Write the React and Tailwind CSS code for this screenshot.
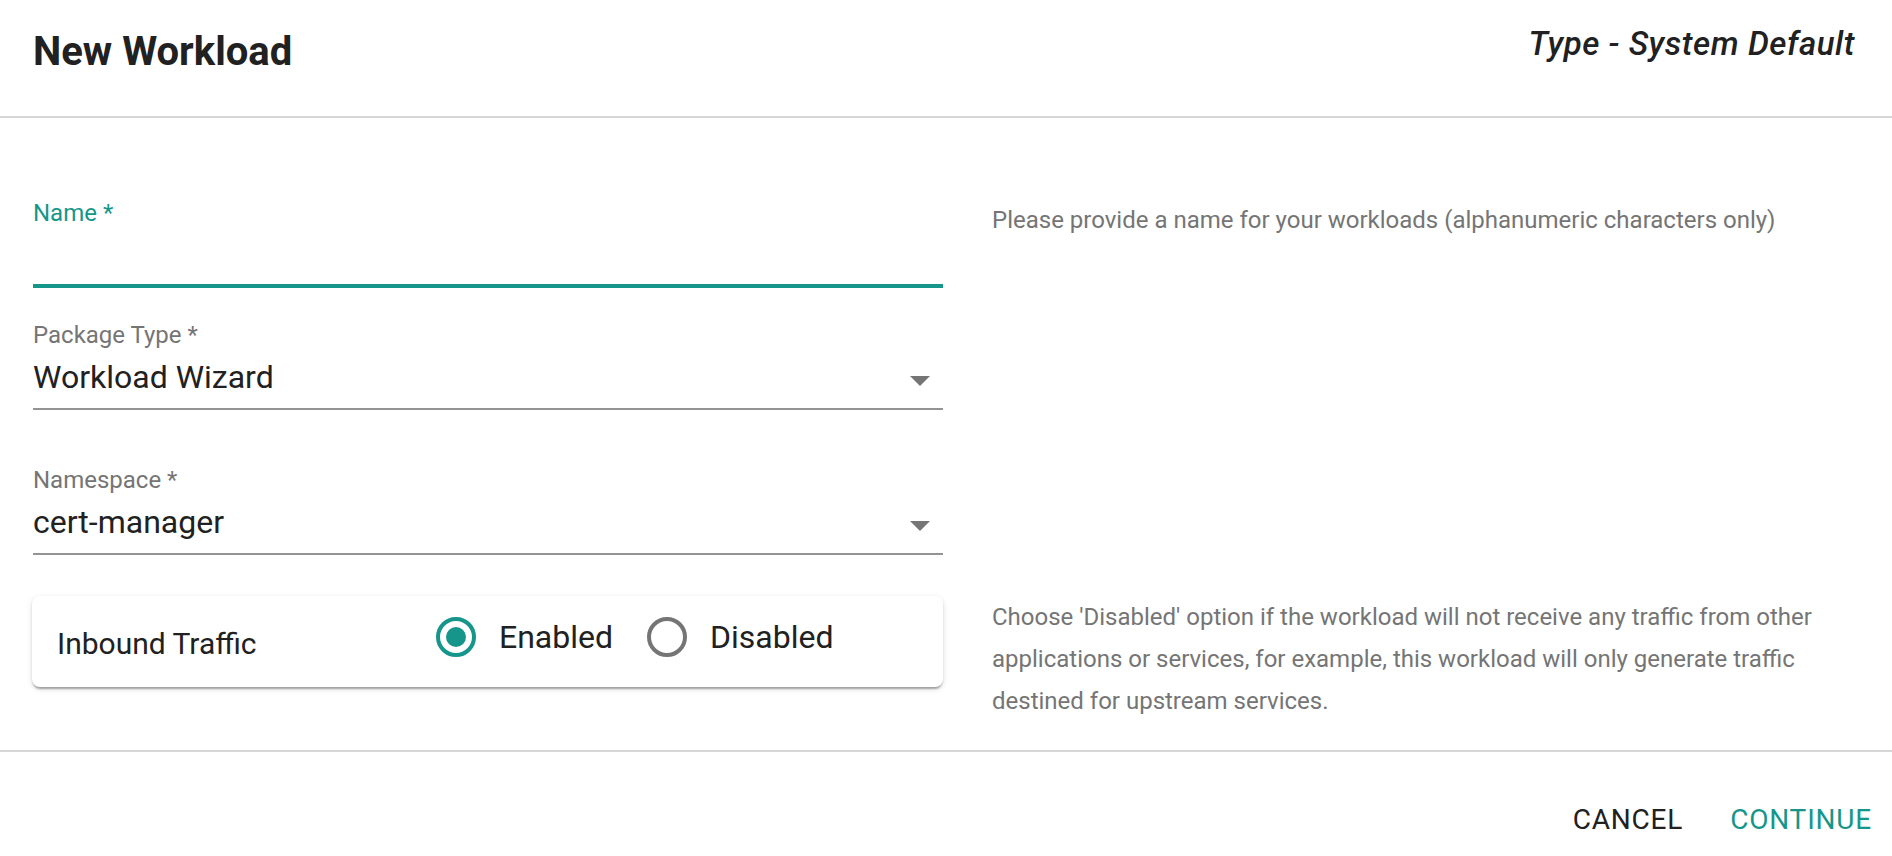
import React from "react";

const TEAL = "#16968a";

function Arrow() {
  return (
    <svg width="20" height="10" viewBox="0 0 20 10" className="mt-[8px] mr-[13px] shrink-0">
      <path d="M0 0 L20 0 L10 10 Z" fill="#757575" />
    </svg>
  );
}

function Radio({ checked, label }) {
  return (
    <div className="flex items-center">
      <svg width="48" height="48" viewBox="0 0 24 24" className="shrink-0">
        <circle cx="12" cy="12" r="9" fill="none" stroke={checked ? TEAL : "#757575"} strokeWidth="2" />
        {checked && <circle cx="12" cy="12" r="5" fill={TEAL} />}
      </svg>
      <span className="ml-[19px] text-[32px] leading-[38px] text-[#212121]">{label}</span>
    </div>
  );
}

function SelectField({ label, value }) {
  return (
    <div className="border-b-2 border-[#949494] pb-[12px]">
      <div className="text-[24px] leading-[24px] text-[#757575]">{label}</div>
      <div className="mt-[11px] flex items-center justify-between">
        <span className="text-[32px] leading-[38px] text-[#212121]">{value}</span>
        <Arrow />
      </div>
    </div>
  );
}

export default function App() {
  return (
    <div className="w-[1892px] h-[856px] overflow-hidden bg-white font-['Roboto',sans-serif]">
      {/* header */}
      <header className="h-[118px] border-b-2 border-[#d6d6d6] flex justify-between items-start pl-[33px] pr-[37px]">
        <h1 className="mt-[28px] text-[40px] leading-[48px] font-bold text-[#212121]">New Workload</h1>
        <div className="mt-[24px] text-[33px] leading-[40px] tracking-[0.55px] font-medium italic text-[#212121]">
          Type - System Default
        </div>
      </header>

      {/* body */}
      <main className="h-[632px] pl-[33px] pt-[81px]">
        <div className="flex">
          <div className="w-[910px]">
            <div className="mt-[2px] text-[24px] leading-[24px] text-[#16968a]">Name *</div>
            <div className="h-[59px]" />
            <div className="h-[4px] bg-[#16968a]" />
          </div>
          <p className="ml-[49px] text-[24px] leading-[42px] text-[#757575]">
            Please provide a name for your workloads (alphanumeric characters only)
          </p>
        </div>

        <div className="w-[910px] mt-[35px]">
          <SelectField label="Package Type *" value="Workload Wizard" />
        </div>

        <div className="w-[910px] mt-[58px]">
          <SelectField label="Namespace *" value="cert-manager" />
        </div>

        <div className="flex mt-[41px]">
          <div className="w-[911px] -ml-px h-[91px] rounded-[8px] bg-white shadow-[0_4px_2px_-2px_rgba(0,0,0,0.2),0_2px_2px_0_rgba(0,0,0,0.14),0_2px_6px_0_rgba(0,0,0,0.12)] flex items-start pl-[25px]">
            <div className="w-[375px] mt-[30px] text-[30px] leading-[36px] text-[#212121]">Inbound Traffic</div>
            <div className="mt-[17px] flex items-center gap-[30px]">
              <Radio checked label="Enabled" />
              <Radio label="Disabled" />
            </div>
          </div>
          <p className="ml-[49px] text-[24px] leading-[42px] text-[#757575] whitespace-nowrap">
            Choose 'Disabled' option if the workload will not receive any traffic from other
            <br />
            applications or services, for example, this workload will only generate traffic
            <br />
            destined for upstream services.
          </p>
        </div>
      </main>

      {/* footer */}
      <footer className="border-t-2 border-[#d6d6d6] flex justify-end gap-[47px] pr-[20px] pt-[50px]">
        <button className="text-[28px] leading-[36px] tracking-[0.8px] text-[#212121]">CANCEL</button>
        <button className="text-[28px] leading-[36px] tracking-[0.8px] text-[#16968a]">CONTINUE</button>
      </footer>
    </div>
  );
}
